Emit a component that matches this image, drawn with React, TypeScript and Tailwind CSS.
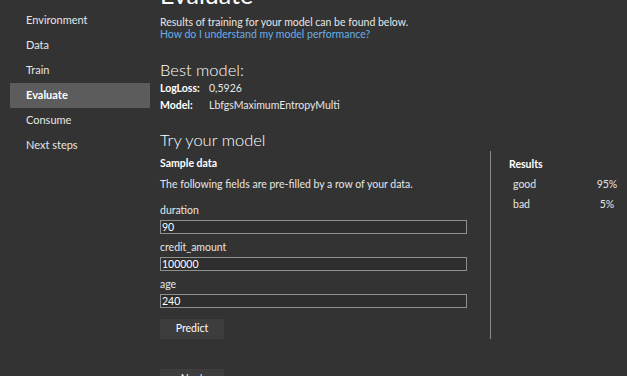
import React from "react";

const steps = ["Scenario", "Environment", "Data", "Train", "Evaluate", "Consume", "Next steps"];

const fields = [
  { label: "duration", value: "90" },
  { label: "credit_amount", value: "100000" },
  { label: "age", value: "240" },
];

const results = [
  { label: "good", value: "95%" },
  { label: "bad", value: "5%" },
];

export default function App() {
  return (
    <div className="h-[376px] w-[627px] overflow-hidden bg-[#333333] text-[10.5px] text-[#e6e6e6] font-['Lato',sans-serif]">
      <div className="flex">
        {/* side nav, scrolled so the first item is half hidden */}
        <nav className="mt-[-17px] w-[150px] pl-[10px] text-[11px]">
          {steps.map((s) => (
            <div
              key={s}
              className={
                s === "Evaluate"
                  ? "flex h-[25px] items-center bg-[#5c5c5c] pl-[16px] font-bold text-white"
                  : "flex h-[25px] items-center pl-[16px]"
              }
            >
              {s}
            </div>
          ))}
        </nav>

        <main className="mt-[-22px] flex-1 pl-[10px]">
          <h1 className="text-[25px] leading-[32px] text-white">Evaluate</h1>
          <p className="mt-[6px] leading-[12px]">Results of training for your model can be found below.</p>
          <a className="block leading-[12px] text-[#6aaee6]">How do I understand my model performance?</a>

          <h2 className="mt-[19px] text-[16.5px] leading-[22px] font-light text-white">Best model:</h2>
          <div className="grid grid-cols-[49px_1fr] gap-y-[3px] leading-[14px]">
            <span className="font-bold text-white">LogLoss:</span>
            <span>0,5926</span>
            <span className="font-bold text-white">Model:</span>
            <span>LbfgsMaximumEntropyMulti</span>
          </div>

          <h2 className="mt-[17px] text-[16.5px] leading-[22px] font-light text-white">Try your model</h2>

          <div className="flex">
            <div className="w-[331px] border-r border-[#8a8a8a] pt-[5px]">
              <div className="font-bold leading-[14px] text-white">Sample data</div>
              <p className="mt-[7px] leading-[14px]">The following fields are pre-filled by a row of your data.</p>
              <div className="mt-[6px] flex flex-col">
                {fields.map((f) => (
                  <div key={f.label} className="mt-[6px] flex flex-col">
                    <label className="leading-[14px]">{f.label}</label>
                    <div className="mt-[3px] flex h-[14px] w-[307px] items-center border border-[#8f8f8f] bg-[#2e2e2e] pl-[1px] leading-[12px] text-white">
                      {f.value}
                    </div>
                  </div>
                ))}
              </div>
              <button className="mt-[11px] h-[20px] w-[64px] bg-[#3d3d3d] text-center text-white">Predict</button>
            </div>

            <div className="flex-1 pl-[18px] pr-[5px] pt-[6px]">
              <div className="font-bold leading-[14px] text-white">Results</div>
              {results.map((r) => (
                <div key={r.label} className="mt-[6px] flex h-[14px] items-center pl-[4px] leading-[14px]">
                  <span className="flex-1">{r.label}</span>
                  <span className="w-[30px] text-center">{r.value}</span>
                </div>
              ))}
            </div>
          </div>

          <button className="mt-[30px] h-[20px] w-[64px] bg-[#3d3d3d] text-white">Next</button>
        </main>
      </div>
    </div>
  );
}
